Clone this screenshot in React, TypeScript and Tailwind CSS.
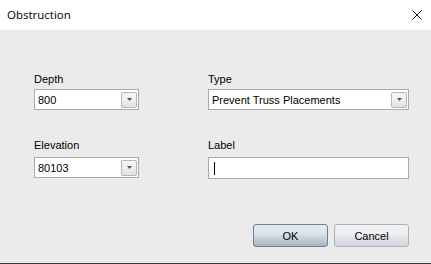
import { ReactNode } from 'react';

function DropButton() {
  return (
    <span className="flex items-center justify-center w-[16px] h-[16px] rounded-[2px] border border-[#b4b8bc] bg-[linear-gradient(to_bottom,#f7f7f7_0%,#eceef0_50%,#dfe2e5_100%)]">
      <svg width="5" height="3" viewBox="0 0 5 3">
        <path d="M0 0h5L2.5 3z" fill="#505050" />
      </svg>
    </span>
  );
}

function Combo({ value, width }: { value: string; width: string }) {
  return (
    <div className={`flex items-center justify-between h-[21px] border border-[#a9a9a9] bg-white pl-[3px] pr-[1px] ${width}`}>
      <span className="text-[11px] leading-[14px] text-black">{value}</span>
      <DropButton />
    </div>
  );
}

function Field({ label, gap, children }: { label: string; gap: string; children: ReactNode }) {
  return (
    <div className="flex flex-col">
      <span className={`text-[11px] leading-[14px] text-black ${gap}`}>{label}</span>
      {children}
    </div>
  );
}

function DlgButton({ children, primary }: { children: ReactNode; primary?: boolean }) {
  const skin = primary
    ? 'border-[#6f7f8f] bg-[linear-gradient(to_bottom,#e4eaf1_0%,#dae2ea_45%,#cbd4de_60%,#a9b4c0_100%)]'
    : 'border-[#acb0b4] bg-[linear-gradient(to_bottom,#f3f4f6_0%,#eceef1_45%,#e0e3e7_60%,#d2d6db_100%)]';
  return (
    <button className={`w-[75px] h-[23px] rounded-[3px] border text-[11px] leading-[14px] text-black ${skin}`}>
      {children}
    </button>
  );
}

export default function App() {
  return (
    <div className="w-[431px] h-[264px] flex flex-col bg-[#ebebeb] font-['Liberation_Sans',Arial,sans-serif] overflow-hidden">
      <header className="flex items-center justify-between h-[30px] bg-white pl-[7px] pr-[9px]">
        <span className="font-['Open_Sans','Noto_Sans',sans-serif] text-[11.5px] text-black">Obstruction</span>
        <svg width="10" height="10" viewBox="0 0 10 10">
          <path d="M0.5 0.5L9.5 9.5M9.5 0.5L0.5 9.5" stroke="#1a1a1a" strokeWidth="1" />
        </svg>
      </header>

      <div className="flex-1 flex flex-col pl-[34px] pr-[22px] pt-[42px]">
        <div className="grid grid-cols-[174px_200px] gap-y-[28px]">
          <Field label="Depth" gap="mb-[3px]">
            <Combo value="800" width="w-[105px]" />
          </Field>
          <Field label="Type" gap="mb-[3px]">
            <Combo value="Prevent Truss Placements" width="w-[201px]" />
          </Field>
          <Field label="Elevation" gap="mb-[5px]">
            <Combo value="80103" width="w-[105px]" />
          </Field>
          <Field label="Label" gap="mb-[5px]">
            <div className="flex items-center h-[22px] w-[201px] border border-[#a9a9a9] bg-white pl-[5px]">
              <span className="w-[1px] h-[13px] bg-black" />
            </div>
          </Field>
        </div>

        <div className="flex justify-end gap-[6px] mt-[45px]">
          <DlgButton primary>OK</DlgButton>
          <DlgButton>Cancel</DlgButton>
        </div>
      </div>

      <div className="h-[1px] bg-[#3a3a3a]" />
    </div>
  );
}
